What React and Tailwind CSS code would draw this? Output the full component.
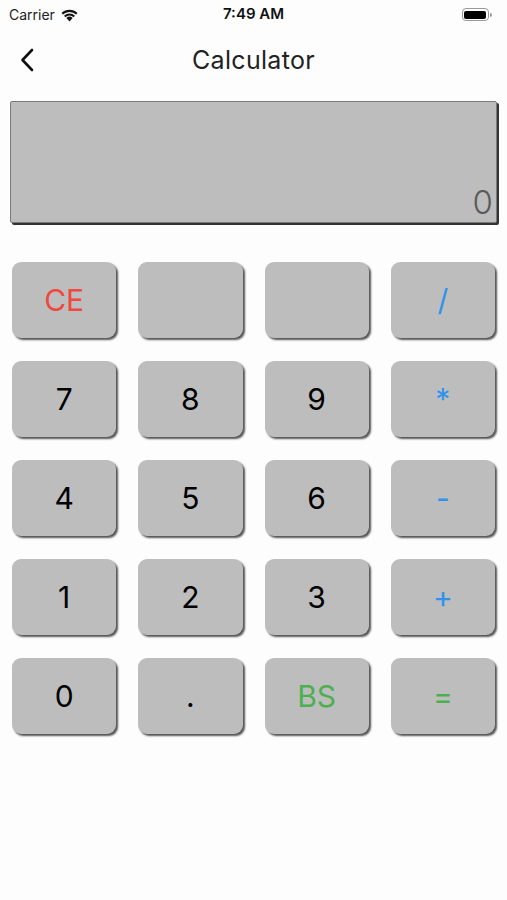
import React from "react";

const keys = [
  { t: "CE", c: "text-[#f0483e]" },
  { t: "", c: "" },
  { t: "", c: "" },
  { t: "/", c: "text-[#2e93ee]" },
  { t: "7", c: "text-black" },
  { t: "8", c: "text-black" },
  { t: "9", c: "text-black" },
  { t: "*", c: "text-[#2e93ee] text-[24px]" },
  { t: "4", c: "text-black" },
  { t: "5", c: "text-black" },
  { t: "6", c: "text-black" },
  { t: "-", c: "text-[#2e93ee]" },
  { t: "1", c: "text-black" },
  { t: "2", c: "text-black" },
  { t: "3", c: "text-black" },
  { t: "+", c: "text-[#2e93ee]" },
  { t: "0", c: "text-black" },
  { t: ".", c: "text-black" },
  { t: "BS", c: "text-[#4caf50]" },
  { t: "=", c: "text-[#4caf50]" },
];

export default function App() {
  return (
    <div
      className="w-[507px] h-[900px] bg-[#fdfdfe] overflow-hidden"
      style={{ fontFamily: "Inter, 'Noto Sans', sans-serif" }}
    >
      {/* status bar */}
      <div className="h-[28px] flex items-center justify-between px-[9px] pt-[1px]">
        <div className="flex items-center gap-[5px] w-[120px]">
          <span className="text-[14px] text-[#222]">Carrier</span>
          <svg width="19" height="14" viewBox="0 0 17 13">
            <path d="M8.5 12.5 L5.6 9.3 A4.2 4.2 0 0 1 11.4 9.3 Z" fill="#111" />
            <path d="M3.4 7.1 A7.4 7.4 0 0 1 13.6 7.1 L12.3 8.5 A5.5 5.5 0 0 0 4.7 8.5 Z" fill="#111" />
            <path d="M1.1 4.7 A10.7 10.7 0 0 1 15.9 4.7 L14.6 6.1 A8.8 8.8 0 0 0 2.4 6.1 Z" fill="#111" />
          </svg>
        </div>
        <span className="text-[15px] font-semibold text-[#111]">7:49 AM</span>
        <div className="w-[120px] flex justify-end pr-[6px]">
          <div className="flex items-center">
            <div className="w-[27px] h-[13px] rounded-[4px] border border-[#999] p-[1.5px]">
              <div className="w-full h-full rounded-[2px] bg-black" />
            </div>
            <div className="w-[2px] h-[4px] bg-[#999] rounded-r-sm ml-[1px]" />
          </div>
        </div>
      </div>

      {/* nav bar */}
      <div className="h-[64px] relative flex items-center justify-center">
        <svg
          className="absolute left-[18px] top-[19px]"
          width="18"
          height="26"
          viewBox="0 0 18 26"
        >
          <path d="M14 3 L4.5 13 L14 23" fill="none" stroke="#111" strokeWidth="2.6" strokeLinecap="round" strokeLinejoin="round" />
        </svg>
        <span className="text-[25px] text-[#222] tracking-[0.3px] pt-[1px]">Calculator</span>
      </div>

      {/* display */}
      <div className="px-[10px] pt-[9px]">
        <div className="h-[122px] bg-[#bdbdbd] border border-[#7a7a7a] shadow-[2px_2px_0_#333] rounded-[2px] flex items-end justify-end pr-[3px] pb-[3px]">
          <span className="text-[33px] leading-none text-[#5a5a5a] font-light">0</span>
        </div>
      </div>

      {/* keypad */}
      <div className="grid grid-cols-4 gap-x-[22px] gap-y-[23px] px-[12px] pt-[39px] pr-[12px]">
        {keys.map((k, i) => (
          <div
            key={i}
            className={`h-[76px] rounded-[9px] bg-[#bdbdbd] shadow-[2px_2px_2px_#555] flex items-center justify-center text-[30px] ${k.c}`}
          >
            {k.t}
          </div>
        ))}
      </div>
    </div>
  );
}
